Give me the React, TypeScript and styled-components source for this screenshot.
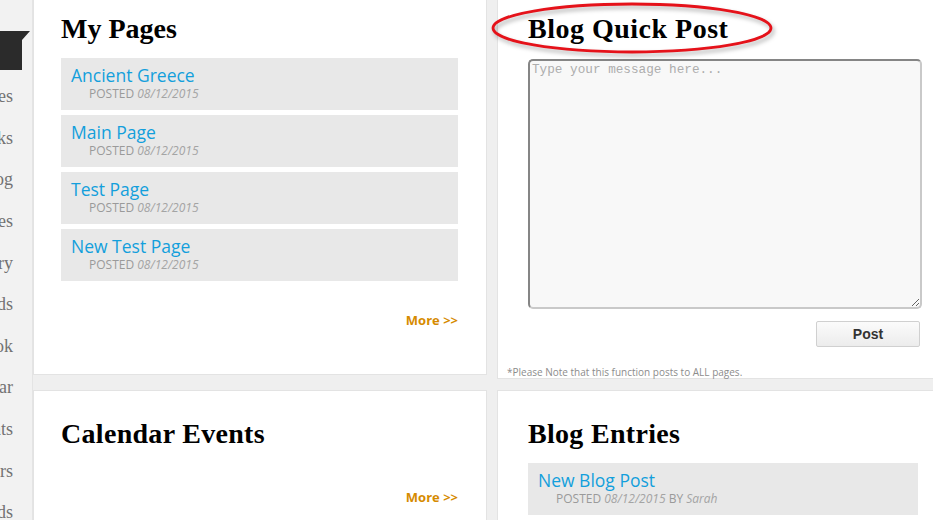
import React from 'react';
import styled, { createGlobalStyle } from 'styled-components';

const GlobalStyle = createGlobalStyle`
  body {
    margin: 0;
    overflow: hidden;
    background-color: #efefef;
    font-family: "Open Sans", "Liberation Sans", sans-serif;
  }
`;

const Page = styled.div`
  display: flex;
  height: 520px;
  overflow: hidden;
`;

const Sidebar = styled.nav`
  width: 32px;
  flex-shrink: 0;
  background-color: #f2f2f2;
  border-right: 1px solid #e4e4e4;
  padding-top: 31px;
`;

const ActiveTab = styled.div`
  width: 30px;
  height: 39px;
  background-color: #2b2b2b;
  clip-path: polygon(0 0, 30px 0, 22px 9px, 22px 39px, 0 39px);
  margin-bottom: 6px;
`;

const NavItem = styled.div`
  display: flex;
  justify-content: flex-end;
  align-items: center;
  height: 41.6px;
  padding-right: 19px;
  overflow: hidden;
  white-space: nowrap;
  font-family: "Liberation Serif", serif;
  font-size: 18px;
  color: #727272;
`;

const Board = styled.main`
  display: grid;
  grid-template-columns: 454px 454px;
  grid-template-rows: 394px 200px;
  column-gap: 10px;
  row-gap: 11px;
  margin-top: -15px;
  flex-shrink: 0;
`;

const Panel = styled.section<{ $left?: number; $right?: number; $height?: number }>`
  position: relative;
  box-sizing: border-box;
  display: flex;
  flex-direction: column;
  background-color: #ffffff;
  border: 1px solid #e3e3e3;
  padding: 27px ${(p) => p.$right ?? 28}px 0 ${(p) => p.$left ?? 27}px;
  align-self: start;
  height: ${(p) => (p.$height ? `${p.$height}px` : '100%')};
`;

const HeadingWrap = styled.div`
  position: relative;
  margin-bottom: 13px;
`;

const Heading = styled.h2<{ $spacing?: number }>`
  margin: 0;
  font-family: "Liberation Serif", serif;
  font-weight: bold;
  font-size: 28px;
  line-height: 32px;
  letter-spacing: ${(p) => p.$spacing ?? 0.3}px;
  color: #000;
`;

const Circle = styled.svg`
  position: absolute;
  left: -41px;
  top: -15px;
  pointer-events: none;
  filter: drop-shadow(2px 3px 2px rgba(0, 0, 0, 0.3));
`;

const EntryList = styled.div`
  display: flex;
  flex-direction: column;
  gap: 5px;
`;

const Entry = styled.div`
  box-sizing: border-box;
  height: 52px;
  padding: 6px 10px 0;
  background-color: #e8e8e8;
`;

const EntryTitle = styled.a`
  display: block;
  font-size: 17.5px;
  line-height: 22px;
  color: #139fdc;
  cursor: pointer;
`;

const EntryMeta = styled.div`
  padding-left: 18px;
  font-size: 12px;
  line-height: 16px;
  color: #9a9a9a;
  text-transform: uppercase;

  em {
    text-transform: none;
    color: #a4a4a4;
  }
`;

const MoreLink = styled.a<{ $top: number }>`
  align-self: flex-end;
  margin-top: ${(p) => p.$top}px;
  font-size: 13px;
  line-height: 16px;
  font-weight: bold;
  color: #d68b00;
  cursor: pointer;
`;

const MessageBox = styled.textarea`
  box-sizing: border-box;
  width: 100%;
  height: 250px;
  margin: 1px 0 0;
  padding: 1px 2px;
  border: 2px solid #c9c9c9;
  border-top-color: #858585;
  border-left-color: #858585;
  border-radius: 5px;
  background-color: #f8f8f8;
  font-family: "Liberation Mono", monospace;
  font-size: 12.7px;
  line-height: 15px;
  color: #444;
  outline: none;

  &::placeholder {
    color: #adadad;
  }
`;

const ButtonRow = styled.div`
  display: flex;
  justify-content: flex-end;
  margin-top: 12px;
  padding-right: 2px;
`;

const PostButton = styled.button`
  width: 104px;
  height: 26px;
  border: 1px solid #d0d0d0;
  border-radius: 2px;
  background: linear-gradient(#fbfbfb, #ececec);
  font-family: "Liberation Sans", Arial, sans-serif;
  font-size: 14px;
  font-weight: bold;
  color: #333;
  cursor: pointer;
`;

const Note = styled.div`
  margin: auto 0 0 -21px;
  font-size: 10px;
  line-height: 12px;
  color: #8c8c8c;
`;

const navItems = ['Pages', 'Links', 'Blog', 'Images', 'Gallery', 'Downloads', 'Guestbook', 'Calendar', 'Events', 'Members', 'Awards'];

const pages = ['Ancient Greece', 'Main Page', 'Test Page', 'New Test Page'];

const App = () => {
  return (
    <>
      <GlobalStyle />
      <Page>
        <Sidebar>
          <ActiveTab />
          {navItems.map((item) => (
            <NavItem key={item}><span>{item}</span></NavItem>
          ))}
        </Sidebar>
        <Board>
          <Panel $height={390}>
            <HeadingWrap><Heading $spacing={0}>My Pages</Heading></HeadingWrap>
            <EntryList>
              {pages.map((title) => (
                <Entry key={title}>
                  <EntryTitle>{title}</EntryTitle>
                  <EntryMeta>Posted <em>08/12/2015</em></EntryMeta>
                </Entry>
              ))}
            </EntryList>
            <MoreLink $top={31}>More &gt;&gt;</MoreLink>
          </Panel>
          <Panel $left={30}>
            <HeadingWrap>
              <Heading $spacing={0.5}>Blog Quick Post</Heading>
              <Circle width="292" height="62" viewBox="0 0 292 62">
                <ellipse cx="145" cy="30" rx="139" ry="24" fill="none" stroke="#e5121a" strokeWidth="2.8" />
              </Circle>
            </HeadingWrap>
            <MessageBox placeholder="Type your message here..." />
            <ButtonRow><PostButton>Post</PostButton></ButtonRow>
            <Note>*Please Note that this function posts to ALL pages.</Note>
          </Panel>
          <Panel>
            <HeadingWrap><Heading>Calendar Events</Heading></HeadingWrap>
            <MoreLink $top={26}>More &gt;&gt;</MoreLink>
          </Panel>
          <Panel $left={30} $right={32}>
            <HeadingWrap><Heading>Blog Entries</Heading></HeadingWrap>
            <EntryList>
              <Entry>
                <EntryTitle>New Blog Post</EntryTitle>
                <EntryMeta>Posted <em>08/12/2015</em> by <em>Sarah</em></EntryMeta>
              </Entry>
            </EntryList>
          </Panel>
        </Board>
      </Page>
    </>
  );
};

export default App;
